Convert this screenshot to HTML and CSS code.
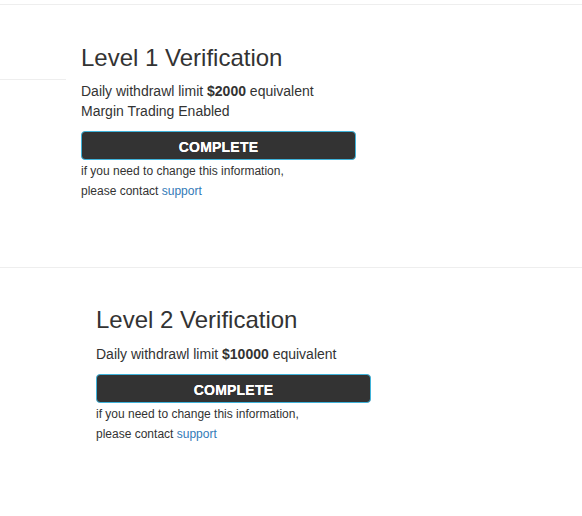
FILE: index.html
```html
<!DOCTYPE html>
<html lang="en">
<head>
    <meta charset="UTF-8">
    <meta name="viewport" content="width=device-width, initial-scale=1.0">
    <title>Verification</title>
    <link rel="stylesheet" href="styles.css">
</head>
<body>
    <div class="topbar"></div>

    <section class="level level-one">
        <aside class="side"><div class="side-tab"></div></aside>
        <div class="level-body">
            <h3>Level 1 Verification</h3>
            <p>Daily withdrawl limit <strong>$2000</strong> equivalent<br>Margin Trading Enabled</p>
            <button class="btn-complete" type="button">COMPLETE</button>
            <p class="note">if you need to change this information,<br>please contact <a href="#">support</a></p>
        </div>
    </section>

    <section class="level level-two">
        <div class="level-body">
            <h3>Level 2 Verification</h3>
            <p>Daily withdrawl limit <strong>$10000</strong> equivalent</p>
            <button class="btn-complete" type="button">COMPLETE</button>
            <p class="note">if you need to change this information,<br>please contact <a href="#">support</a></p>
        </div>
    </section>
</body>
</html>
```

FILE: styles.css
```css
body { margin: 0; font-family: "Liberation Sans", Arial, sans-serif; font-size: 14px; line-height: 20px; color: #333; background: #fff; }
.topbar { height: 4px; border-bottom: 1px solid #eee; }

.level { display: flex; padding-top: 20px; }
.level-one { padding-bottom: 66px; }
.level-two { border-top: 1px solid #eee; padding-top: 19px; padding-left: 96px; padding-bottom: 60px; }

.side { width: 66px; flex: none; margin-top: -20px; }
.side-tab { height: 74px; border-bottom: 1px solid #eee; }
.level-one .level-body { padding-left: 15px; }
.level-body { width: 275px; }

h3 { font-size: 24px; font-weight: normal; line-height: 1.1; margin: 20px 0 10px; }
p { margin: 0 0 10px; }
strong { font-weight: bold; }

.btn-complete { display: block; width: 100%; height: 29px; padding: 6px 12px 2px; background: #333; color: #fff; border: 1px solid #3fb3da; border-radius: 4px; font-family: "Liberation Sans", Arial, sans-serif; font-size: 14px; font-weight: bold; line-height: 19px; letter-spacing: 0.2px; text-shadow: 0 0 0.4px #fff; }

.note { font-size: 12px; line-height: 20px; margin: 1px 0 0; }
.note a { color: #337ab7; text-decoration: none; }
```
